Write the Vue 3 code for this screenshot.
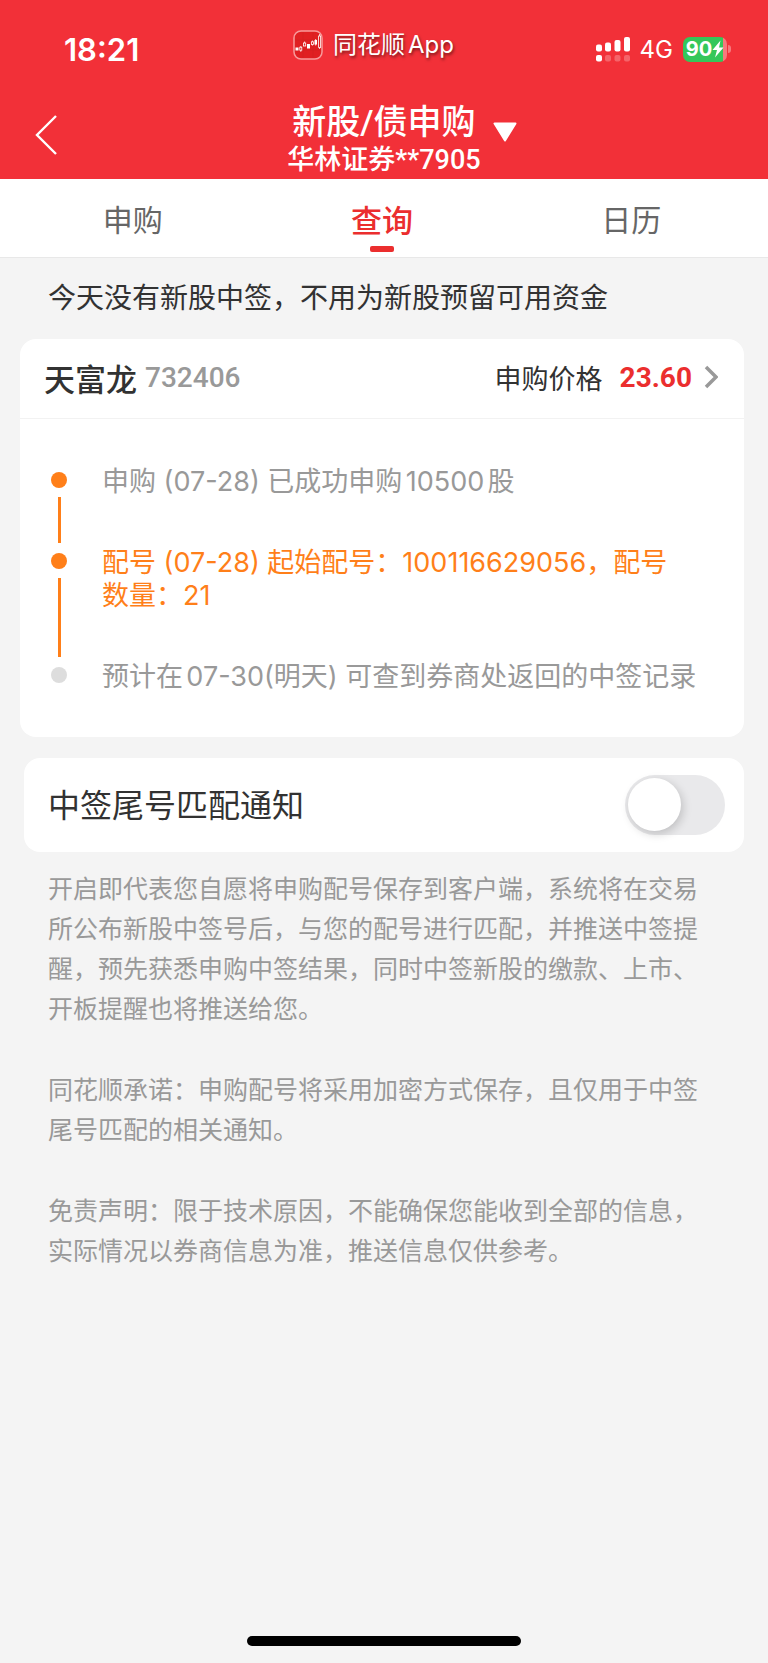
<script setup>
import { ref } from 'vue'

const tabs = [
  { key: 'apply', label: '申购' },
  { key: 'query', label: '查询' },
  { key: 'calendar', label: '日历' },
]
const activeTab = ref('query')
const notify = ref(false)

const stock = {
  name: '天富龙',
  code: '732406',
  price: '23.60',
}

const steps = [
  { text: '申购 (07-28) 已成功申购10500股', status: 'done' },
  { text: '配号 (07-28) 起始配号：100116629056，配号\n数量：21', status: 'current' },
  { text: '预计在07-30(明天) 可查到券商处返回的中签记录', status: 'wait' },
]

const notes = [
  '开启即代表您自愿将申购配号保存到客户端，系统将在交易所公布新股中签号后，与您的配号进行匹配，并推送中签提醒，预先获悉申购中签结果，同时中签新股的缴款、上市、开板提醒也将推送给您。',
  '同花顺承诺：申购配号将采用加密方式保存，且仅用于中签尾号匹配的相关通知。',
  '免责声明：限于技术原因，不能确保您能收到全部的信息，实际情况以券商信息为准，推送信息仅供参考。',
]
</script>

<template>
  <div class="page">
    <header class="header">
      <div class="status-bar">
        <span class="time">18:21</span>
        <div class="source">
          <svg class="app-icon" width="30" height="30" viewBox="0 0 30 30">
            <rect x="1" y="1" width="28" height="28" rx="7" fill="#e01f22" stroke="#f79a9b" stroke-width="1.5" />
            <path d="M2 10h26M2 20h26M10 2v26M20 2v26" stroke="#cf2023" stroke-width="0.5" />
            <g fill="#fff">
              <rect x="2.5" y="17.5" width="3" height="3" />
              <rect x="14" y="14" width="3" height="4.5" />
              <rect x="21.5" y="10" width="2.5" height="4.5" />
            </g>
            <g fill="none" stroke="#fff" stroke-width="0.8">
              <rect x="6.8" y="17.2" width="2" height="3" />
              <path d="M7.8 16v1.2M7.8 20.2v1.6M11.6 11.5v1.5" />
              <rect x="10.5" y="13" width="2.2" height="3" />
              <rect x="18.4" y="11.8" width="2" height="2.6" />
              <path d="M19.4 10.5v1.3M19.4 14.4v1.2M22.7 9v6.5M26.6 4v2M26.6 17.5v1.5" />
              <rect x="25.6" y="6" width="2" height="11.5" />
            </g>
          </svg>
          <span>同花顺App</span>
        </div>
        <div class="indicators">
          <svg width="34" height="25" viewBox="0 0 34 25" fill="#fff">
            <rect x="0" y="7.5" width="6" height="7" rx="2" />
            <rect x="9" y="5.5" width="6" height="9" rx="2" />
            <rect x="18.5" y="3" width="6" height="11.5" rx="2" />
            <rect x="28" y="0" width="6" height="14.5" rx="2" />
            <rect x="0" y="18" width="6" height="6.5" rx="2" />
            <g opacity="0.25">
              <rect x="9" y="18" width="6" height="6.5" rx="2" />
              <rect x="18.5" y="18" width="6" height="6.5" rx="2" />
              <rect x="28" y="18" width="6" height="6.5" rx="2" />
            </g>
          </svg>
          <span class="network">4G</span>
          <div class="battery">
            <span>90</span>
            <svg width="12" height="18" viewBox="0 0 12 18">
              <path d="M8.5 0.5L0.5 10h4.5L3 17.5L11.5 7.5H7z" fill="#fff" />
            </svg>
          </div>
          <i class="battery-cap"></i>
        </div>
      </div>
      <div class="nav">
        <button class="back" type="button" aria-label="返回">
          <svg width="24" height="42" viewBox="0 0 24 42">
            <path d="M21 2L2 21L21 40" fill="none" stroke="#fff" stroke-width="2.4" />
          </svg>
        </button>
        <div class="heading">
          <h1>新股/债申购</h1>
          <p>华林证券**7905</p>
        </div>
        <button class="switch-account" type="button" aria-label="切换账户">
          <svg width="24" height="20" viewBox="0 0 24 20">
            <path d="M1.5 1.5h21L12 18.5z" fill="#fff" stroke="#fff" stroke-width="2" stroke-linejoin="round" />
          </svg>
        </button>
      </div>
    </header>

    <nav class="tabs">
      <button
        v-for="tab in tabs"
        :key="tab.key"
        type="button"
        class="tab"
        :class="{ active: activeTab === tab.key }"
        @click="activeTab = tab.key"
      >
        {{ tab.label }}
      </button>
    </nav>

    <main class="content">
      <p class="notice">今天没有新股中签，不用为新股预留可用资金</p>

      <section class="card">
        <a class="card-head" href="#">
          <span class="name">{{ stock.name }}</span>
          <span class="code">{{ stock.code }}</span>
          <span class="price-label">申购价格</span>
          <span class="price">{{ stock.price }}</span>
          <svg width="14" height="24" viewBox="0 0 14 24">
            <path d="M2 2L12 12L2 22" fill="none" stroke="#999" stroke-width="3.5" />
          </svg>
        </a>
        <ol class="timeline">
          <li v-for="step in steps" :key="step.text" class="step" :class="step.status">
            <div class="marker">
              <i class="dot"></i>
              <i class="line"></i>
            </div>
            <p>{{ step.text }}</p>
          </li>
        </ol>
      </section>

      <section class="card notify">
        <label for="notify">中签尾号匹配通知</label>
        <input id="notify" v-model="notify" class="toggle" type="checkbox" role="switch" />
      </section>

      <div class="notes">
        <p v-for="note in notes" :key="note">{{ note }}</p>
      </div>
    </main>

    <div class="home-indicator"></div>
  </div>
</template>

<style>
body {
  margin: 0;
  background: #f4f4f4;
}
</style>

<style scoped>
.page {
  display: flex;
  flex-direction: column;
  min-height: 100vh;
  background: #f4f4f4;
  color: #323232;
  font-family: Inter, 'Noto Sans CJK SC', sans-serif;
  text-autospace: normal;
}

h1,
p,
ol {
  margin: 0;
  padding: 0;
}

button {
  border: none;
  padding: 0;
  background: none;
  font-family: inherit;
  cursor: pointer;
}

svg {
  display: block;
  flex: none;
}

.header {
  background: #f23038;
  color: #fff;
}

.status-bar {
  display: grid;
  grid-template-columns: 1fr auto 1fr;
  align-items: center;
  height: 98px;
  padding: 0 37px 0 16px;
  box-sizing: border-box;
}

.time {
  margin-left: 48px;
  font-size: 31px;
  font-weight: 600;
}

.source {
  display: flex;
  align-items: center;
  gap: 10px;
  padding-bottom: 8px;
  font-size: 24px;
  line-height: 32px;
  text-shadow: 1px 2px 3px rgba(0, 0, 0, 0.5);
}

.indicators {
  display: flex;
  align-items: center;
  justify-content: flex-end;
}

.network {
  margin: 0 10px;
  font-size: 24px;
}

.battery {
  display: flex;
  align-items: center;
  justify-content: center;
  width: 44px;
  height: 25px;
  border-radius: 7px;
  background: linear-gradient(to right, #34c759 40px, #f7787d 40px);
  font-size: 20px;
  font-weight: 700;
}

.battery-cap {
  width: 3px;
  height: 8px;
  margin-left: 1px;
  border-radius: 0 4px 4px 0;
  background: #f7787d;
}

.nav {
  display: grid;
  grid-template-columns: 1fr auto 1fr;
  align-items: center;
  gap: 12px;
  height: 81px;
  padding: 0 35px;
}

.back,
.switch-account {
  justify-self: start;
}

.back {
  margin-bottom: 8px;
}

.switch-account {
  margin-bottom: 14px;
}

.heading {
  text-align: center;
  font-family: Roboto, 'Noto Sans CJK SC', sans-serif;
}

.heading h1 {
  font-size: 34px;
  font-weight: 500;
  line-height: 44px;
}

.heading p {
  font-size: 27px;
  font-weight: 500;
  line-height: 33px;
}

.tabs {
  display: flex;
  padding: 0 12px 0 8px;
  border-bottom: 1px solid #e8e8e8;
  background: #fff;
}

.tab {
  position: relative;
  flex: 1;
  height: 78px;
  color: #666;
  font-size: 30px;
}

.tab.active {
  color: #eb2e2e;
  font-size: 31px;
  font-weight: 500;
}

.tab.active::after {
  content: '';
  position: absolute;
  bottom: 5px;
  left: 50%;
  width: 24px;
  height: 6px;
  margin-left: -12px;
  border-radius: 2px;
  background: #eb2e2e;
}

.content {
  padding: 20px 24px 0 20px;
}

.notice {
  padding: 0 28px;
  font-size: 28px;
  line-height: 40px;
}

.card {
  margin-top: 21px;
  border-radius: 16px;
  background: #fff;
}

.card-head {
  display: flex;
  align-items: center;
  height: 76px;
  padding: 0 26px 3px 24px;
  border-bottom: 1px solid #f2f2f2;
  color: inherit;
  text-decoration: none;
}

.name {
  font-size: 31px;
  font-weight: 500;
}

.code {
  flex: 1;
  margin-left: 8px;
  color: #999;
  font-family: Roboto, sans-serif;
  font-size: 28px;
  font-weight: 500;
}

.price-label {
  font-size: 27px;
}

.price {
  margin: 0 12px 0 17px;
  color: #eb2e2e;
  font-family: Roboto, sans-serif;
  font-size: 28px;
  font-weight: 700;
}

.timeline {
  padding: 46px 32px 44px 31px;
  list-style: none;
}

.step {
  display: flex;
  gap: 35px;
  color: #999;
  font-size: 27px;
  line-height: 33px;
}

.step p {
  padding-bottom: 48px;
  white-space: pre-line;
}

.step:last-child p {
  padding-bottom: 0;
}

.step.current {
  color: #ff7f19;
}

.marker {
  display: flex;
  flex: none;
  flex-direction: column;
  align-items: center;
  gap: 9px;
  width: 16px;
  padding: 7px 0 3px;
}

.dot {
  width: 16px;
  height: 16px;
  border-radius: 50%;
  background: #ff7f19;
}

.line {
  flex: 1;
  width: 3px;
  background: #ff7f19;
}

.wait .dot {
  background: #ddd;
}

.wait .line {
  display: none;
}

.notify {
  display: flex;
  align-items: center;
  justify-content: space-between;
  margin-left: 4px;
  padding: 17px 19px 17px 24px;
}

.notify label {
  padding-bottom: 4px;
  font-size: 32px;
}

.toggle {
  appearance: none;
  width: 100px;
  height: 60px;
  margin: 0;
  border-radius: 30px;
  background: #e9e9eb;
  cursor: pointer;
}

.toggle::before {
  content: '';
  display: block;
  width: 53px;
  height: 53px;
  margin: 3px;
  border-radius: 50%;
  background: #fff;
  box-shadow: 2px 3px 10px rgba(0, 0, 0, 0.18);
}

.toggle:checked {
  background: #34c759;
}

.toggle:checked::before {
  margin-left: 44px;
}

.notes {
  padding: 17px 28px;
  color: #999;
  font-size: 25px;
  line-height: 40px;
}

.notes p + p {
  margin-top: 41px;
}

.home-indicator {
  align-self: center;
  width: 274px;
  height: 10px;
  margin: auto 0 17px;
  border-radius: 5px;
  background: #000;
}
</style>
